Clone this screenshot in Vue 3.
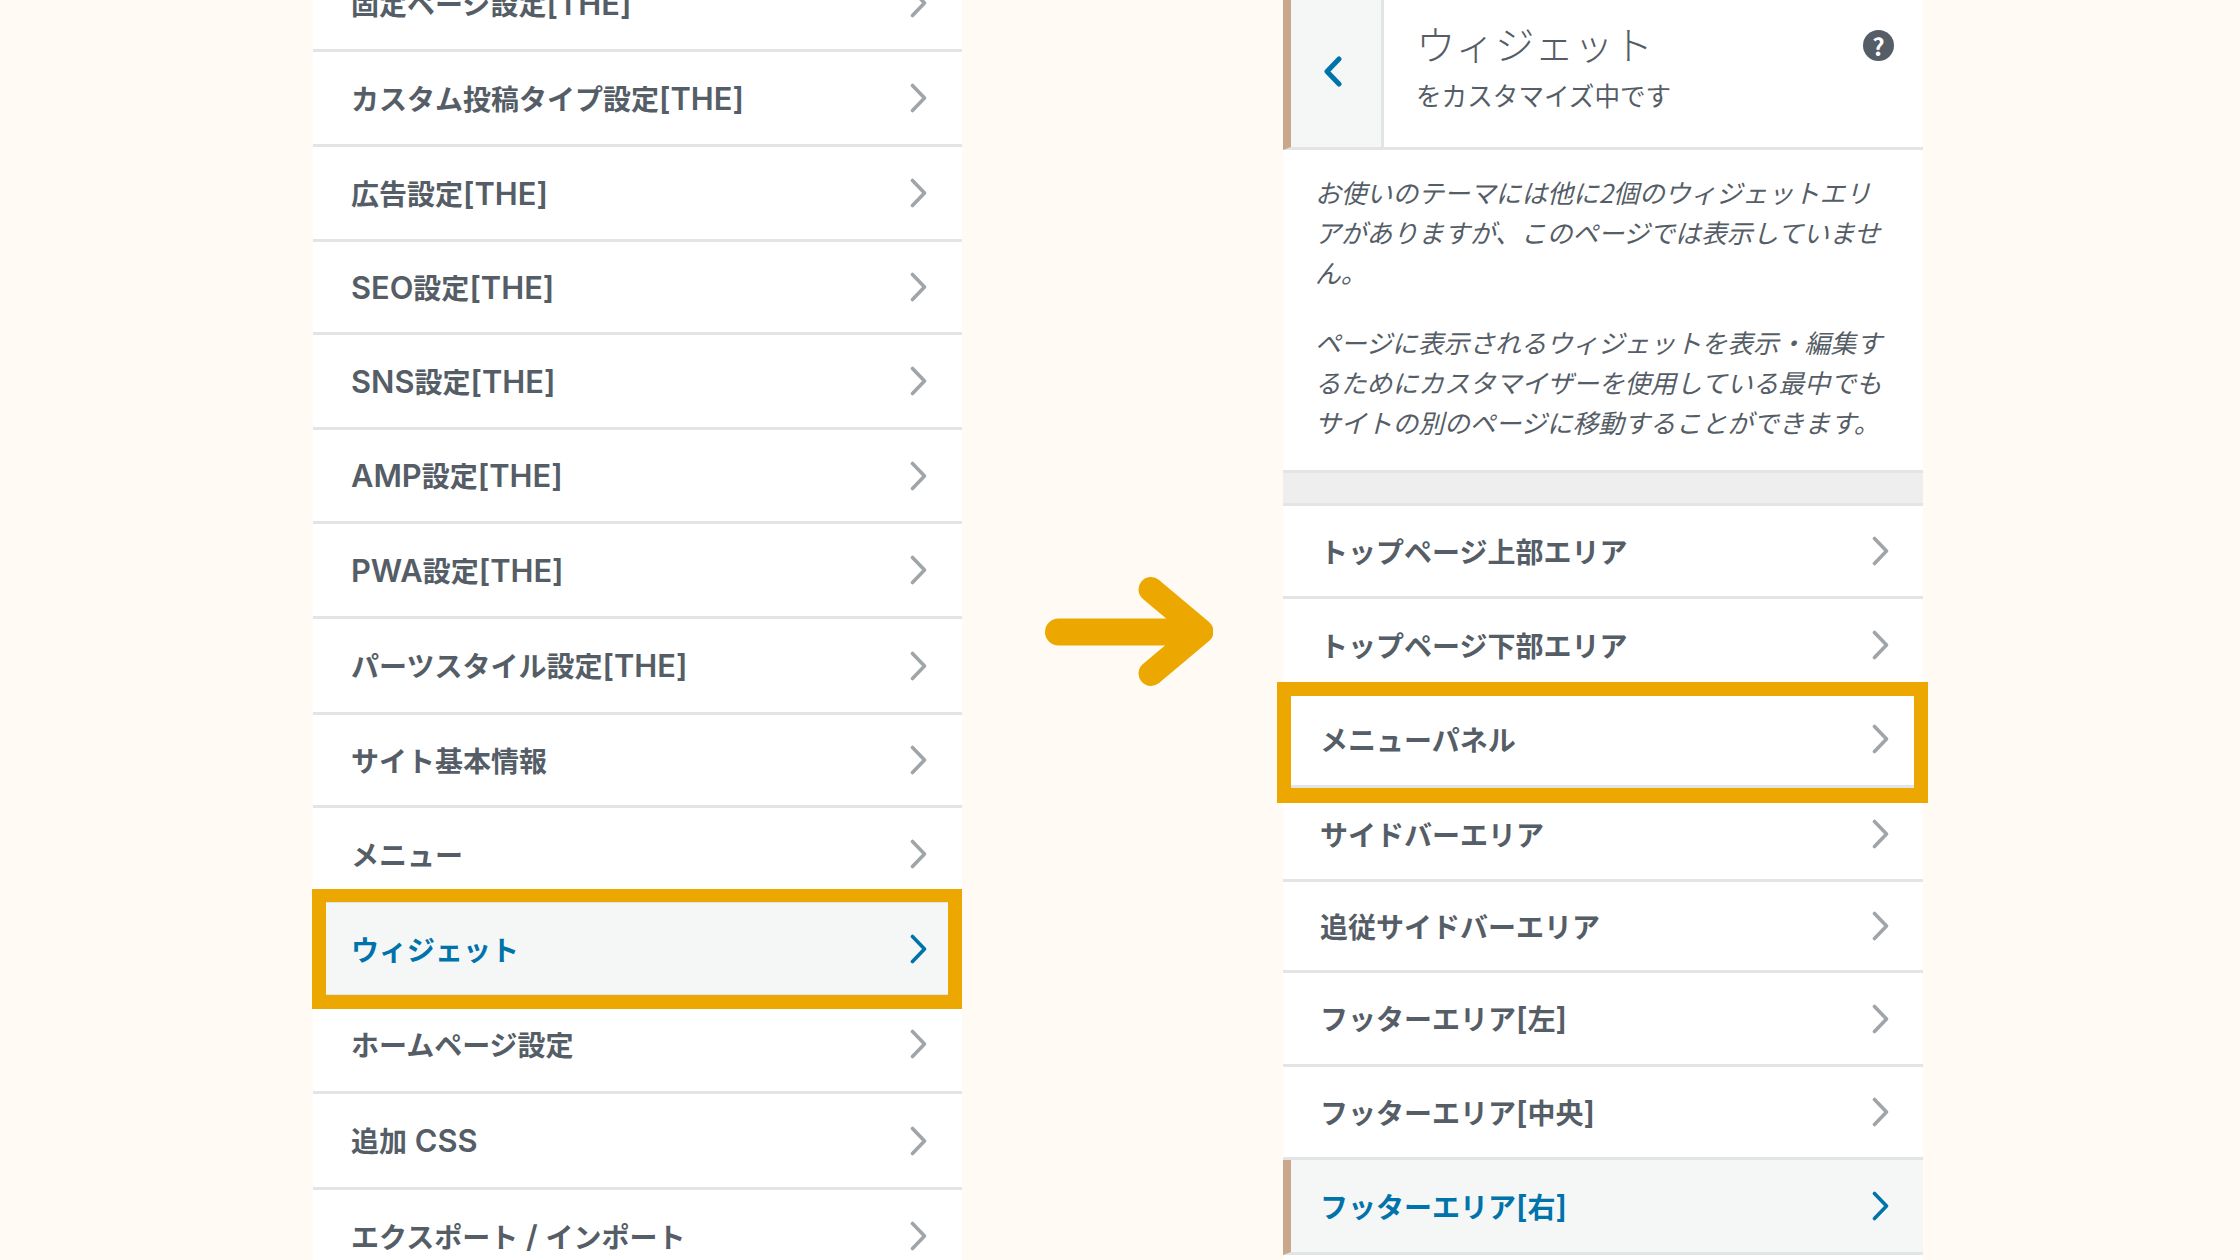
<script setup>
const leftRows = [
  { label: '固定ページ設定[THE]', h: 95 },
  { label: 'カスタム投稿タイプ設定[THE]', h: 95 },
  { label: '広告設定[THE]', h: 95 },
  { label: 'SEO設定[THE]', h: 93 },
  { label: 'SNS設定[THE]', h: 95 },
  { label: 'AMP設定[THE]', h: 94 },
  { label: 'PWA設定[THE]', h: 95 },
  { label: 'パーツスタイル設定[THE]', h: 96 },
  { label: 'サイト基本情報', h: 93 },
  { label: 'メニュー', h: 95 },
  { label: 'ウィジェット', h: 94, active: true, marked: true },
  { label: 'ホームページ設定', h: 97 },
  { label: '追加 CSS', h: 96 },
  { label: 'エクスポート / インポート', h: 95 },
]
const rightRows = [
  { label: 'トップページ上部エリア', h: 93 },
  { label: 'トップページ下部エリア', h: 94 },
  { label: 'メニューパネル', h: 95, marked: true },
  { label: 'サイドバーエリア', h: 94 },
  { label: '追従サイドバーエリア', h: 91 },
  { label: 'フッターエリア[左]', h: 94 },
  { label: 'フッターエリア[中央]', h: 93 },
  { label: 'フッターエリア[右]', h: 95, active: true, bar: true },
]
const parts = (label) =>
  label
    .split(/([A-Za-z[\]/ ]+)/)
    .filter(Boolean)
    .map((text) => ({ text, latin: /^[A-Za-z[\]/ ]+$/.test(text) }))
</script>

<template>
  <div class="page">
    <section class="panel panel-left">
      <div
        v-for="row in leftRows"
        :key="row.label"
        class="row row-left"
        :class="{ active: row.active }"
        :style="{ height: row.h + 'px' }"
      >
        <span class="label"><span v-for="(p, i) in parts(row.label)" :key="i" :class="{ latin: p.latin }">{{ p.text }}</span></span>
        <svg class="chev" viewBox="0 0 17 30" width="17" height="30">
          <polyline points="2.5,2.5 14.5,15 2.5,27.5" fill="none" stroke="currentColor" stroke-width="3.6" stroke-linecap="round" stroke-linejoin="round" />
        </svg>
        <i v-if="row.marked" class="mark mark-left"></i>
      </div>
    </section>

    <svg class="arrow" viewBox="0 0 168 111" width="168" height="111">
      <line x1="13.5" y1="56" x2="150" y2="56" stroke="#eca800" stroke-width="27" stroke-linecap="round" />
      <polyline points="106,13.5 156,55.5 106,97.5" fill="none" stroke="#eca800" stroke-width="25" stroke-linecap="round" stroke-linejoin="round" />
    </svg>

    <section class="panel panel-right">
      <header class="head">
        <div class="back">
          <svg viewBox="0 0 19 31" width="19" height="31">
            <polyline points="16,3 4,15.5 16,28" fill="none" stroke="#0073aa" stroke-width="5" stroke-linecap="round" stroke-linejoin="round" />
          </svg>
        </div>
        <div class="titles">
          <div class="title">ウィジェット</div>
          <div class="sub">をカスタマイズ中です</div>
        </div>
        <span class="help">?</span>
      </header>
      <div class="desc">
        <p>お使いのテーマには他に2個のウィジェットエリ<br>アがありますが、このページでは表示していませ<br>ん。</p>
        <p>ページに表示されるウィジェットを表示・編集す<br>るためにカスタマイザーを使用している最中でも<br>サイトの別のページに移動することができます。</p>
      </div>
      <div class="band"></div>
      <div
        v-for="row in rightRows"
        :key="row.label"
        class="row row-right"
        :class="{ active: row.active, bar: row.bar }"
        :style="{ height: row.h + 'px' }"
      >
        <span class="label"><span v-for="(p, i) in parts(row.label)" :key="i" :class="{ latin: p.latin }">{{ p.text }}</span></span>
        <svg class="chev" viewBox="0 0 17 30" width="17" height="30">
          <polyline points="2.5,2.5 14.5,15 2.5,27.5" fill="none" stroke="currentColor" stroke-width="3.6" stroke-linecap="round" stroke-linejoin="round" />
        </svg>
        <i v-if="row.marked" class="mark mark-right"></i>
      </div>
    </section>
  </div>
</template>

<style scoped>
.page {
  width: 2240px;
  height: 1260px;
  overflow: hidden;
  display: flex;
  align-items: flex-start;
  background: #fffaf4;
  font-family: "Noto Sans CJK JP", "Noto Sans", sans-serif;
  color: #555d66;
}
.panel {
  background: #fff;
  height: 1400px;
  flex: none;
}
.panel-left {
  width: 649px;
  margin-left: 313px;
  margin-top: -43px;
}
.panel-right {
  width: 640px;
}
.arrow {
  flex: none;
  margin: 576px 70px 0 83px;
}
.row {
  position: relative;
  box-sizing: border-box;
  display: flex;
  align-items: center;
  justify-content: space-between;
  border-bottom: 3px solid #e3e4e6;
  font-size: 28px;
  font-weight: 600;
  white-space: nowrap;
}
.label {
  line-height: 40px;
}
.latin {
  font-family: Inter, "Liberation Sans", sans-serif;
  font-size: 30.8px;
  font-weight: 600;
}
.row-left {
  padding: 0 35px 0 38px;
}
.row-right {
  padding: 0 34px 0 37px;
}
.row.active {
  background: #f5f7f7;
  color: #0073aa;
}
.row.bar {
  border-left: 8px solid #c9a78b;
  padding-left: 29px;
}
.chev {
  flex: none;
  color: #a0a5aa;
}
.active .chev {
  color: #0073aa;
}
.mark {
  position: absolute;
  box-sizing: border-box;
  border-style: solid;
  border-color: #eca800;
  pointer-events: none;
}
.mark-left {
  left: -1px;
  right: 0;
  top: -14px;
  bottom: -15px;
  border-width: 13px 14px 14px 14px;
}
.mark-right {
  left: -6px;
  right: -5px;
  top: -11px;
  bottom: -18px;
  border-width: 14px 14px 15px 14px;
}
.head {
  box-sizing: border-box;
  height: 150px;
  display: flex;
  align-items: flex-start;
  border-left: 8px solid #c9a78b;
  border-bottom: 3px solid #e3e4e6;
}
.back {
  box-sizing: border-box;
  width: 93px;
  height: 147px;
  padding: 0 8px 5px 0;
  display: flex;
  align-items: center;
  justify-content: center;
  background: #f5f7f7;
  border-right: 3px solid #e3e4e6;
}
.titles {
  padding: 19px 0 0 32px;
}
.title {
  font-size: 39.5px;
  line-height: 48px;
  font-weight: 300;
}
.sub {
  margin-top: 10px;
  font-size: 25.6px;
  line-height: 36px;
}
.help {
  margin: 30px 29px 0 auto;
  width: 31px;
  height: 31px;
  border-radius: 50%;
  background: #555d66;
  color: #fff;
  font-size: 24px;
  font-weight: 700;
  line-height: 31px;
  text-align: center;
}
.desc {
  box-sizing: border-box;
  height: 320px;
  padding: 22px 0 0 32px;
  font-size: 25.8px;
  line-height: 40px;
  font-style: italic;
  white-space: nowrap;
}
.desc p {
  margin: 0;
}
.desc p + p {
  margin-top: 30px;
}
.band {
  box-sizing: border-box;
  height: 36px;
  background: #eee;
  border-top: 3px solid #e3e4e6;
  border-bottom: 3px solid #e3e4e6;
}
</style>
